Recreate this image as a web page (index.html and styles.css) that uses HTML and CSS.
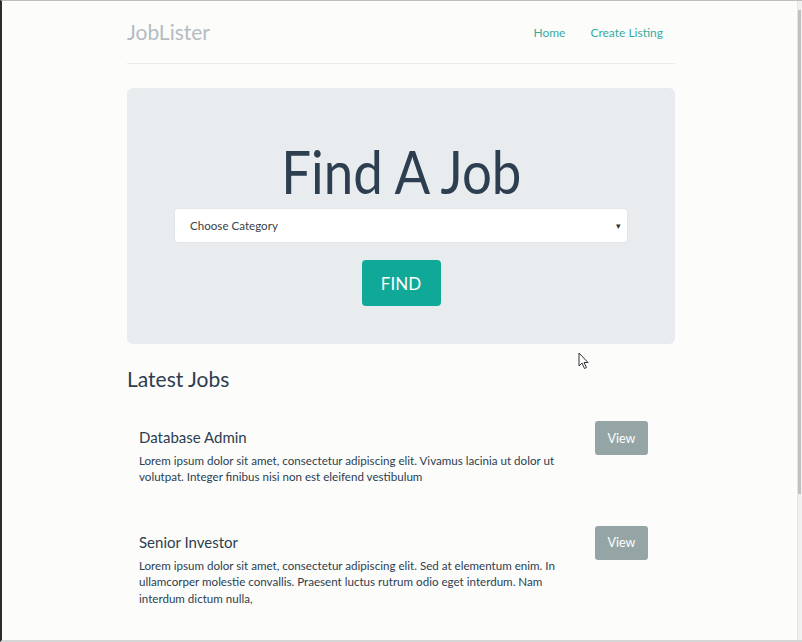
FILE: index.html
```html
<!DOCTYPE html>
<html>
<head>
<meta charset="utf-8">
<link rel="stylesheet" href="styles.css">
</head>
<body>
<div class="window">
  <div class="page">
    <div class="container">
      <header class="header">
        <div class="brand">JobLister</div>
        <nav class="nav">
          <a href="#">Home</a>
          <a href="#">Create Listing</a>
        </nav>
      </header>
      <section class="jumbotron">
        <h1 class="title">Find A Job</h1>
        <div class="select">
          <span>Choose Category</span>
          <span class="caret">▾</span>
        </div>
        <button class="find">FIND</button>
      </section>
      <h3 class="latest">Latest Jobs</h3>
      <div class="job">
        <div class="job-text">
          <h4>Database Admin</h4>
          <p>Lorem ipsum dolor sit amet, consectetur adipiscing elit. Vivamus lacinia ut dolor ut volutpat. Integer finibus nisi non est eleifend vestibulum</p>
        </div>
        <button class="view">View</button>
      </div>
      <div class="job">
        <div class="job-text">
          <h4>Senior Investor</h4>
          <p>Lorem ipsum dolor sit amet, consectetur adipiscing elit. Sed at elementum enim. In ullamcorper molestie convallis. Praesent luctus rutrum odio eget interdum. Nam interdum dictum nulla,</p>
        </div>
        <button class="view">View</button>
      </div>
    </div>
    <svg class="cursor" width="12" height="18" viewBox="0 0 12 18"><path d="M1 1 L1 14 L4 11 L6.5 16.5 L8.5 15.5 L6 10.5 L10 10.5 Z" fill="#fff" stroke="#333" stroke-width="1"/></svg>
  </div>
  <div class="scrollbar"><div class="thumb"></div></div>
</div>
</body>
</html>
```
FILE: styles.css
```css
html, body {
  margin: 0;
  padding: 0;
  height: 100%;
}
body {
  background: #fcfcfb;
  font-family: Lato, "Open Sans", sans-serif;
  color: #2c3e50;
  overflow: hidden;
}
.window {
  display: flex;
  height: 642px;
  box-sizing: border-box;
  border-left: 2px solid #2d2d2d;
  border-top: 1px solid #bdbdbd;
  border-bottom: 2px solid #d6d6d6;
}
.page {
  flex: 1;
  position: relative;
  overflow: hidden;
}
.scrollbar {
  width: 5px;
  background: #f0f0f0;
  border-left: 1px solid #e6e6e6;
  padding-top: 9px;
  box-sizing: border-box;
}
.thumb {
  height: 484px;
  background: #c1c1c1;
  width: 3px;
}
.container {
  width: 548px;
  margin-left: 125px;
}
.header {
  display: flex;
  justify-content: space-between;
  align-items: center;
  height: 62px;
  border-bottom: 1px solid #e9ebec;
  padding-right: 12px;
}
.brand {
  font-size: 21px;
  color: #b4bcc2;
  margin-top: -1px;
}
.nav {
  display: flex;
  gap: 25px;
  margin-top: 0;
}
.nav a {
  color: #3aab9d;
  text-decoration: none;
  font-size: 12px;
}
.jumbotron {
  margin-top: 24px;
  height: 256px;
  background: #e8ecef;
  border-radius: 6px;
  display: flex;
  flex-direction: column;
  align-items: center;
}
.title {
  margin: 47px 0 0;
  font-size: 60px;
  font-weight: 400;
  line-height: 72px;
  color: #2c3e50;
  transform: scaleX(0.88);
}
.select {
  margin-top: 2px;
  width: 452px;
  height: 33px;
  box-sizing: border-box;
  background: #fff;
  border-radius: 3px;
  box-shadow: 0 0 0 1px #e2e6e8;
  display: flex;
  justify-content: space-between;
  align-items: center;
  padding: 0 6px 0 15px;
  font-size: 11.6px;
  color: #3a3f44;
}
.caret {
  font-size: 9px;
  color: #333;
}
.find {
  margin-top: 18px;
  width: 79px;
  height: 46px;
  border: none;
  border-radius: 4px;
  background: #10a896;
  color: #fff;
  font-family: Lato, sans-serif;
  font-size: 17px;
  padding: 0;
}
.latest {
  margin: 22px 0 0;
  font-size: 21px;
  font-weight: 400;
  line-height: 26px;
  color: #2c3e50;
}
.job {
  display: flex;
  justify-content: space-between;
  align-items: flex-start;
  padding: 0 27px 0 12px;
}
.latest + .job {
  margin-top: 29px;
}
.job + .job {
  margin-top: 40px;
}
.job-text {
  width: 425px;
}
.job h4 {
  margin: 6px 0 0;
  font-size: 15px;
  font-weight: 400;
  line-height: 20px;
  color: #2c3e50;
}
.job p {
  margin: 6px 0 0;
  font-size: 11.6px;
  line-height: 16.4px;
  color: #2c3e50;
}
.view {
  width: 53px;
  height: 34px;
  border: none;
  border-radius: 3px;
  background: #95a5a6;
  color: #fff;
  font-family: Lato, sans-serif;
  font-size: 12.5px;
  padding: 0;
}
.cursor {
  position: absolute;
  left: 576px;
  top: 351px;
}
```
